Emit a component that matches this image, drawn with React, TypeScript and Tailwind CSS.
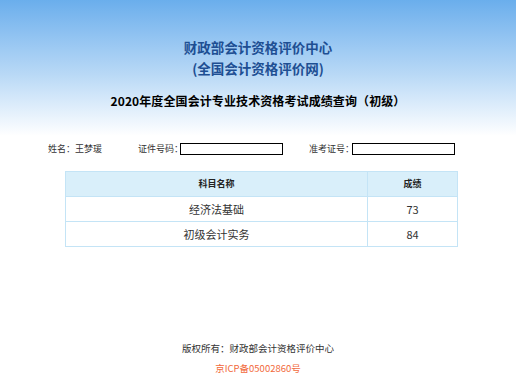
import React from "react";

const font = { fontFamily: '"Noto Sans CJK SC", "Noto Sans", sans-serif' };

export default function App() {
  return (
    <div className="w-[516px] h-[388px] bg-white flex flex-col" style={font}>
      <div className="h-[136px] bg-gradient-to-b from-[#6aaeec] via-[#b9d9f6] via-55% to-[#ffffff] flex flex-col items-center pt-[37px]">
        <div className="text-[13.5px] leading-[21px] font-bold text-[#1e4f93]">财政部会计资格评价中心</div>
        <div className="text-[13.5px] leading-[21px] font-bold text-[#1e4f93]">(全国会计资格评价网)</div>
        <div className="mt-[13px] text-[12px] leading-[18px] font-bold text-black whitespace-nowrap tracking-[0.1px]">2020年度全国会计专业技术资格考试成绩查询（初级）</div>
      </div>
      <div className="flex items-center h-[12px] mt-[7px] text-[9px] leading-[12px] text-[#333] whitespace-nowrap">
        <span className="ml-[48px] w-[90px] shrink-0">姓名：王梦瑗</span>
        <span className="w-[42px] shrink-0">证件号码：</span>
        <span className="w-[103px] h-[12px] shrink-0 border border-black"></span>
        <span className="ml-[26px] w-[43px] shrink-0">准考证号：</span>
        <span className="w-[103px] h-[12px] shrink-0 border border-black"></span>
      </div>
      <div className="mx-[65px] mt-[16px] w-[393px] border border-[#c4e4f6]">
        <div className="flex h-[25px] bg-[#d9effa] text-[9px] font-bold text-[#222] border-b border-[#c4e4f6]">
          <div className="w-[302px] flex items-center justify-center border-r border-[#c4e4f6]">科目名称</div>
          <div className="flex-1 flex items-center justify-center">成绩</div>
        </div>
        <div className="flex h-[25px] text-[11px] text-[#333] border-b border-[#c4e4f6]">
          <div className="w-[302px] flex items-center justify-center border-r border-[#c4e4f6]">经济法基础</div>
          <div className="flex-1 flex items-center justify-center">73</div>
        </div>
        <div className="flex h-[24px] text-[11px] text-[#333]">
          <div className="w-[302px] flex items-center justify-center border-r border-[#c4e4f6]">初级会计实务</div>
          <div className="flex-1 flex items-center justify-center">84</div>
        </div>
      </div>
      <div className="mt-[94px] flex flex-col items-center text-[9.5px] leading-[14px]">
        <div className="text-[#333]">版权所有：财政部会计资格评价中心</div>
        <div className="mt-[6px] text-[#f26a3c]">京ICP备05002860号</div>
      </div>
    </div>
  );
}
